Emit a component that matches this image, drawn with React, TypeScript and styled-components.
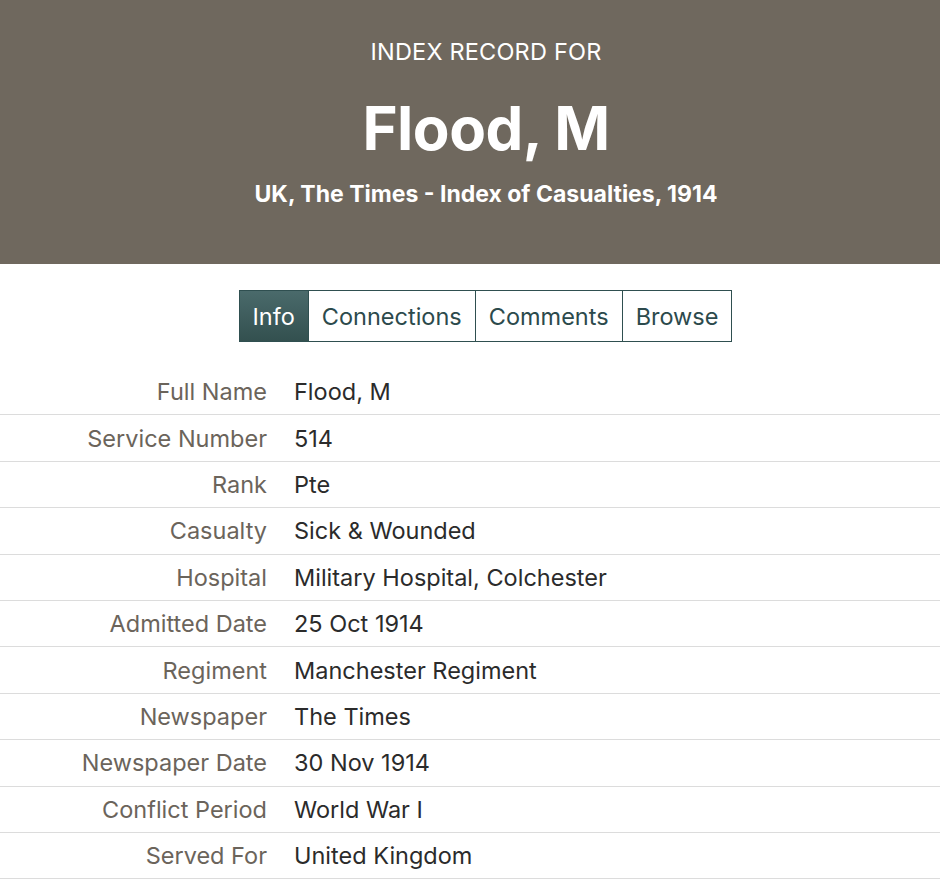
import React, { useState } from "react"
import styled, { createGlobalStyle } from "styled-components"

const GlobalStyle = createGlobalStyle`
  body {
    margin: 0;
    background: #fff;
    font-family: Inter, "Liberation Sans", sans-serif;
  }
`

const fields: [string, string][] = [
  ["Full Name", "Flood, M"],
  ["Service Number", "514"],
  ["Rank", "Pte"],
  ["Casualty", "Sick & Wounded"],
  ["Hospital", "Military Hospital, Colchester"],
  ["Admitted Date", "25 Oct 1914"],
  ["Regiment", "Manchester Regiment"],
  ["Newspaper", "The Times"],
  ["Newspaper Date", "30 Nov 1914"],
  ["Conflict Period", "World War I"],
  ["Served For", "United Kingdom"],
]

const tabs = ["Info", "Connections", "Comments", "Browse"]

const App = () => {
  const [active, setActive] = useState("Info")

  return (
    <>
      <GlobalStyle />
      <Header>
        <Kicker>INDEX RECORD FOR</Kicker>
        <Title>Flood, M</Title>
        <Collection>UK, The Times - Index of Casualties, 1914</Collection>
      </Header>
      <TabBar>
        {tabs.map((t) => (
          <Tab key={t} $active={t === active} onClick={() => setActive(t)}>
            {t}
          </Tab>
        ))}
      </TabBar>
      <Table>
        {fields.map(([label, value]) => (
          <Row key={label}>
            <Label>{label}</Label>
            <Value>{value}</Value>
          </Row>
        ))}
      </Table>
    </>
  )
}

// the page's centre sits a little right of the window's (wider layout, cut off)
const Header = styled.header`
  background: #6f685e;
  color: #fff;
  height: 264px;
  box-sizing: border-box;
  padding: 38px 0 0 32px;
  display: flex;
  flex-direction: column;
  align-items: center;
  text-align: center;
`

const Kicker = styled.div`
  font-size: 23.5px;
  line-height: 28px;
  letter-spacing: 0.2px;
`

const Title = styled.h1`
  margin: 30px 0 0;
  font-size: 60px;
  line-height: 64px;
  font-weight: 700;
  letter-spacing: -0.5px;
`

const Collection = styled.div`
  margin-top: 20px;
  font-size: 23px;
  line-height: 28px;
  font-weight: 700;
`

const TabBar = styled.nav`
  display: flex;
  justify-content: center;
  margin-top: 26px;
  padding-left: 32px;
`

const Tab = styled.button<{ $active: boolean }>`
  font-family: inherit;
  font-size: 23.5px;
  height: 52px;
  padding: 0 13px;
  border: 1px solid #2f4f50;
  margin-left: -1px;
  color: ${(p) => (p.$active ? "#fff" : "#2c4a4c")};
  background: ${(p) => (p.$active ? "linear-gradient(#4a6a6b, #33504f)" : "#fff")};
  cursor: pointer;
`

const Table = styled.div`
  margin-top: 27px;
`

const Row = styled.div`
  display: grid;
  grid-template-columns: 267px 1fr;
  column-gap: 27px;
  align-items: center;
  height: 46.4px;
  box-sizing: border-box;
  border-bottom: 1px solid #dcdcdc;
  font-size: 23.5px;
`

const Label = styled.div`
  text-align: right;
  color: #6b645b;
`

const Value = styled.div`
  color: #2b2b2b;
`

export default App
